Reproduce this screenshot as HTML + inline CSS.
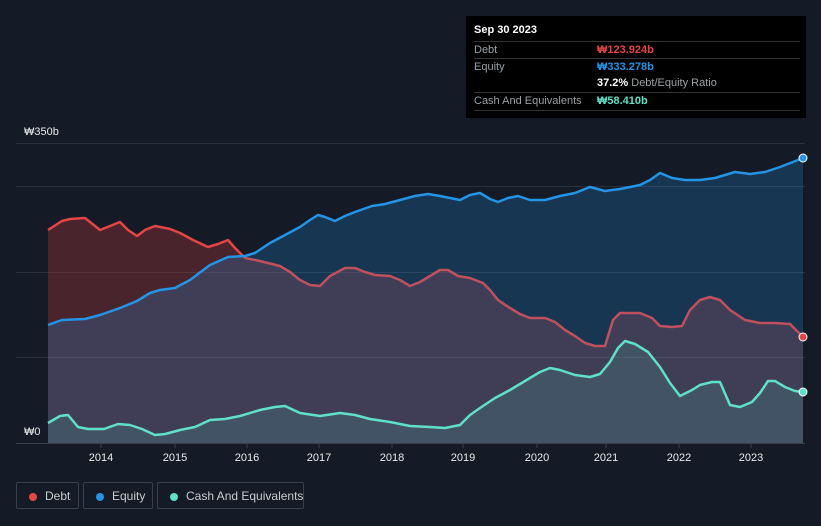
<!DOCTYPE html>
<html><head><meta charset="utf-8"><style>
html,body{margin:0;padding:0;background:#151b26;width:821px;height:526px;overflow:hidden;font-family:"Liberation Sans","Noto Sans CJK KR",sans-serif;}
.tt{position:absolute;left:466px;top:16px;width:340px;height:102px;background:#000;color:#fff;font-size:11px;}
.tt .r{position:absolute;left:8px;width:326px;border-top:1px solid #333;height:17px;line-height:17px;color:#9aa0a6;white-space:nowrap}
.tt .v{position:absolute;left:123px;font-weight:bold}
.leg{position:absolute;top:482px;height:27px;border:1px solid #3a404a;border-radius:2px;color:#c8ccd2;font-size:12px;line-height:27px;box-sizing:border-box;white-space:nowrap}
.leg i{position:absolute;left:12px;top:10px;width:8px;height:8px;border-radius:50%}
.leg span{position:absolute;left:28px;white-space:nowrap}
</style></head><body>
<svg width="821" height="526" style="position:absolute;left:0;top:0">
<g stroke="#2b313c" stroke-width="1">
<line x1="16" y1="143.5" x2="805" y2="143.5"/><line x1="16" y1="186.5" x2="805" y2="186.5"/><line x1="16" y1="272.5" x2="805" y2="272.5"/><line x1="16" y1="357.5" x2="805" y2="357.5"/>
</g>
<polygon fill="rgba(232,64,64,0.25)" points="48,443 48,230 62,221 70,219 85,218 100,230 110,226 120,222 128,230 137,236 145,230 155,226 170,229 180,233 193,240 208,247 218,244 228,240 235,248 245,258 260,261 280,266 290,272 300,280 310,285 320,286 330,276 345,268 355,268 365,272 375,275 390,276 400,280 410,286 420,282 430,276 440,270 448,270 458,276 470,278 483,283 490,290 498,300 510,308 520,314 530,318 545,318 555,322 565,330 575,336 585,343 595,346 605,346 613,320 620,313 640,313 652,318 660,326 672,327 682,326 690,310 700,300 710,297 720,300 730,310 745,320 760,323 775,323 790,324 803,337 803,443"/>
<polygon fill="rgba(33,150,243,0.22)" points="48,443 48,325 62,320 85,319 100,315 120,308 137,301 150,293 160,290 175,288 190,280 210,265 228,257 245,256 255,253 270,243 285,235 300,227 310,220 318,215 325,217 335,221 345,216 355,212 372,206 385,204 400,200 415,196 428,194 440,196 460,200 470,195 480,193 490,199 498,202 508,198 518,196 530,200 545,200 560,196 575,193 590,187 605,191 620,189 640,185 650,180 660,173 672,178 685,180 700,180 715,178 725,175 735,172 750,174 765,172 780,167 793,162 803,158 803,443"/>
<polygon fill="rgba(86,219,195,0.14)" points="48,443 48,423 60,416 68,415 78,427 88,429 104,429 118,424 130,425 142,429 155,435 165,434 180,430 195,427 210,420 225,419 240,416 260,410 275,407 285,406 300,413 320,416 340,413 355,415 370,419 390,422 410,426 430,427 445,428 460,425 470,415 480,408 495,398 510,390 525,381 540,372 550,368 560,370 575,375 590,377 600,374 610,362 618,348 625,341 635,344 648,352 660,367 670,383 680,396 692,390 700,385 712,382 720,382 730,405 740,407 752,402 760,393 768,381 775,381 785,387 795,391 803,392 803,443"/>
<g fill="none" stroke-width="2.5" stroke-linejoin="round">
<polyline stroke="#e64545" points="48,230 62,221 70,219 85,218 100,230 110,226 120,222 128,230 137,236 145,230 155,226 170,229 180,233 193,240 208,247 218,244 228,240 235,248 245,258"/>
<polyline stroke="#c0505e" points="245,258 260,261 280,266 290,272 300,280 310,285 320,286 330,276 345,268 355,268 365,272 375,275 390,276 400,280 410,286 420,282 430,276 440,270 448,270 458,276 470,278 483,283 490,290 498,300 510,308 520,314 530,318 545,318 555,322 565,330 575,336 585,343 595,346 605,346 613,320 620,313 640,313 652,318 660,326 672,327 682,326 690,310 700,300 710,297 720,300 730,310 745,320 760,323 775,323 790,324 803,337"/>
<polyline stroke="#2394e6" points="48,325 62,320 85,319 100,315 120,308 137,301 150,293 160,290 175,288 190,280 210,265 228,257 245,256 255,253 270,243 285,235 300,227 310,220 318,215 325,217 335,221 345,216 355,212 372,206 385,204 400,200 415,196 428,194 440,196 460,200 470,195 480,193 490,199 498,202 508,198 518,196 530,200 545,200 560,196 575,193 590,187 605,191 620,189 640,185 650,180 660,173 672,178 685,180 700,180 715,178 725,175 735,172 750,174 765,172 780,167 793,162 803,158"/>
<polyline stroke="#5fe0c8" points="48,423 60,416 68,415 78,427 88,429 104,429 118,424 130,425 142,429 155,435 165,434 180,430 195,427 210,420 225,419 240,416 260,410 275,407 285,406 300,413 320,416 340,413 355,415 370,419 390,422 410,426 430,427 445,428 460,425 470,415 480,408 495,398 510,390 525,381 540,372 550,368 560,370 575,375 590,377 600,374 610,362 618,348 625,341 635,344 648,352 660,367 670,383 680,396 692,390 700,385 712,382 720,382 730,405 740,407 752,402 760,393 768,381 775,381 785,387 795,391 803,392"/>
</g>
<circle cx="803" cy="158" r="4" fill="#2394e6" stroke="#fff" stroke-width="1"/>
<circle cx="803" cy="337" r="4" fill="#e64545" stroke="#fff" stroke-width="1"/>
<circle cx="803" cy="392" r="4" fill="#5fe0c8" stroke="#fff" stroke-width="1"/>
<line x1="16" y1="443.5" x2="805" y2="443.5" stroke="#3a404a"/>
<g stroke="#3a404a"><line x1="101" y1="443" x2="101" y2="448"/><line x1="175" y1="443" x2="175" y2="448"/><line x1="247" y1="443" x2="247" y2="448"/><line x1="319" y1="443" x2="319" y2="448"/><line x1="392" y1="443" x2="392" y2="448"/><line x1="463" y1="443" x2="463" y2="448"/><line x1="537" y1="443" x2="537" y2="448"/><line x1="606" y1="443" x2="606" y2="448"/><line x1="679" y1="443" x2="679" y2="448"/><line x1="751" y1="443" x2="751" y2="448"/></g>
<g fill="#e6e8ea" font-size="11" font-family="Liberation Sans,sans-serif" text-anchor="middle">
<text x="101" y="461">2014</text><text x="175" y="461">2015</text><text x="247" y="461">2016</text><text x="319" y="461">2017</text><text x="392" y="461">2018</text><text x="463" y="461">2019</text><text x="537" y="461">2020</text><text x="606" y="461">2021</text><text x="679" y="461">2022</text><text x="751" y="461">2023</text>
</g>
<text x="24" y="135" fill="#e6e8ea" font-size="11" font-family="Liberation Sans,sans-serif">₩350b</text>
<text x="24" y="435" fill="#e6e8ea" font-size="11" font-family="Liberation Sans,sans-serif">₩0</text>
</svg>
<div class="tt">
<div style="position:absolute;left:8px;top:8px;font-weight:bold;">Sep 30 2023</div>
<div class="r" style="top:25px">Debt<span class="v" style="color:#e64545">₩123.924b</span></div>
<div class="r" style="top:42px">Equity<span class="v" style="color:#2394e6">₩333.278b</span></div>
<div class="r" style="top:59px;border-top:none"><span class="v" style="color:#fff">37.2% <span style="color:#9aa0a6;font-weight:normal">Debt/Equity Ratio</span></span></div>
<div class="r" style="top:76px">Cash And Equivalents<span class="v" style="color:#5fe0c8">₩58.410b</span></div>
<div style="position:absolute;left:8px;width:326px;top:94px;border-top:1px solid #333"></div>
</div>
<div class="leg" style="left:16px;width:63px"><i style="background:#e64545"></i><span>Debt</span></div>
<div class="leg" style="left:83px;width:70px"><i style="background:#2394e6"></i><span>Equity</span></div>
<div class="leg" style="left:157px;width:147px"><i style="background:#5fe0c8"></i><span>Cash And Equivalents</span></div>
</body></html>
